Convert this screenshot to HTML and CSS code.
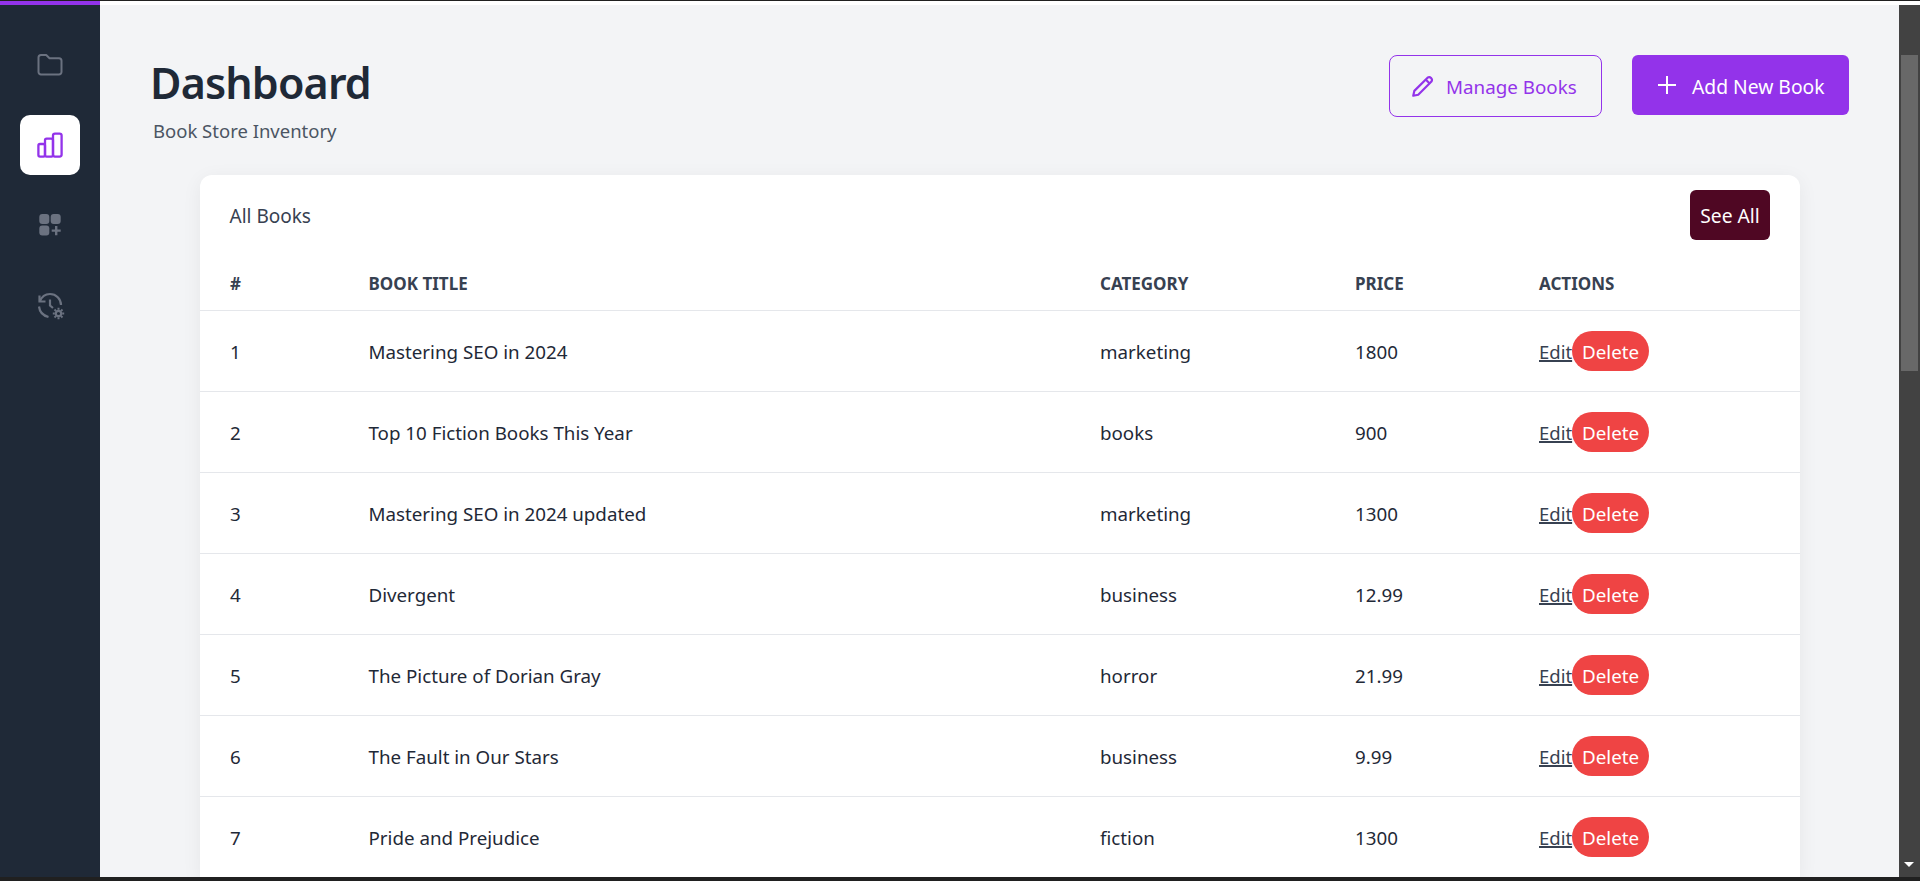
FILE: index.html
```html
<!DOCTYPE html>
<html lang="en">
<head>
  <meta charset="UTF-8">
  <meta name="viewport" content="width=device-width, initial-scale=1.0">
  <title>Dashboard</title>
  <link rel="stylesheet" href="styles.css">
</head>
<body>

<div class="window">
  <div class="page">
    <div class="loadbar"><div class="loadbar-fill"></div></div>
    <div class="layout">

      <nav class="sidebar">
        <a class="side-item">
          <svg class="side-icon" viewBox="0 0 28 28" fill="none" stroke="currentColor" stroke-width="2" stroke-linejoin="round">
            <path d="M2.5 6.5a2.5 2.5 0 0 1 2.5-2.5h5.2l3.3 3.2h9.5a2.5 2.5 0 0 1 2.5 2.5v11.3a2.5 2.5 0 0 1-2.5 2.5H5a2.5 2.5 0 0 1-2.5-2.5z"/>
          </svg>
        </a>
        <a class="side-item active">
          <svg class="side-icon" viewBox="0 0 28 28" fill="none" stroke="currentColor" stroke-width="2.3" stroke-linejoin="round">
            <rect x="2.4" y="13" width="6.6" height="12.6" rx="1.6"/>
            <rect x="9" y="7.6" width="8" height="18" rx="1.6"/>
            <rect x="17" y="2.6" width="8.6" height="23" rx="2"/>
          </svg>
        </a>
        <a class="side-item">
          <svg class="side-icon" viewBox="0 0 28 28" fill="currentColor">
            <rect x="3.3" y="3" width="10" height="10" rx="3"/>
            <rect x="14.7" y="3" width="10" height="10" rx="3"/>
            <rect x="3.3" y="14.6" width="10" height="10" rx="3"/>
            <path d="M19 15h2.4v3.4h3.3v2.4h-3.3v3.4H19v-3.4h-3.3v-2.4H19z"/>
          </svg>
        </a>
        <a class="side-item">
          <svg class="side-icon" viewBox="0 0 28 28" fill="none" stroke="currentColor" stroke-width="2.2">
            <path d="M3.5 4.5v6h6"/>
            <path d="M3.8 10.5C5.5 6 9.5 3 14 3c6 0 11 4.8 11 11"/>
            <path d="M3 15.5c.6 5.2 4.4 9.2 9.5 10.5"/>
            <path d="M14 8.5v6l3 2.5"/>
            <circle cx="22.5" cy="22.5" r="2.7"/>
            <path d="M22.5 16.8v2M22.5 26.2v2M16.8 22.5h2M26.2 22.5h2M18.5 18.5l1.4 1.4M25.1 25.1l1.4 1.4M18.5 26.5l1.4-1.4M25.1 19.9l1.4-1.4" stroke-width="2"/>
          </svg>
        </a>
      </nav>

      <main class="content">
        <header class="topbar">
          <div class="titles">
            <h1 class="title">Dashboard</h1>
            <p class="subtitle">Book Store Inventory</p>
          </div>
          <div class="top-actions">
            <a class="btn btn-outline">
              <svg class="btn-icon" viewBox="0 0 24 24" fill="none" stroke="currentColor" stroke-width="2" stroke-linejoin="round">
                <path d="M4 16.5 16.2 4.3a2.6 2.6 0 0 1 3.6 3.6L7.6 20.1 3 21z"/>
                <path d="M14.5 6l3.6 3.6"/>
              </svg>
              <span class="btn-text">Manage Books</span>
            </a>
            <a class="btn btn-solid">
              <svg class="btn-icon" viewBox="0 0 24 24" fill="none" stroke="currentColor" stroke-width="2">
                <path d="M12 3v18M3 12h18"/>
              </svg>
              <span class="btn-text">Add New Book</span>
            </a>
          </div>
        </header>

        <section class="card">
          <div class="card-head">
            <span class="card-title">All Books</span>
            <a class="see-all">See All</a>
          </div>
          <table class="books">
            <colgroup>
              <col class="col-num">
              <col class="col-title">
              <col class="col-cat">
              <col class="col-price">
              <col>
            </colgroup>
            <thead>
              <tr><th>#</th><th>Book Title</th><th>Category</th><th>Price</th><th>Actions</th></tr>
            </thead>
            <tbody>
              <tr><td>1</td><td>Mastering SEO in 2024</td><td>marketing</td><td>1800</td><td class="actions"><a class="edit">Edit</a><a class="delete">Delete</a></td></tr>
              <tr><td>2</td><td>Top 10 Fiction Books This Year</td><td>books</td><td>900</td><td class="actions"><a class="edit">Edit</a><a class="delete">Delete</a></td></tr>
              <tr><td>3</td><td>Mastering SEO in 2024 updated</td><td>marketing</td><td>1300</td><td class="actions"><a class="edit">Edit</a><a class="delete">Delete</a></td></tr>
              <tr><td>4</td><td>Divergent</td><td>business</td><td>12.99</td><td class="actions"><a class="edit">Edit</a><a class="delete">Delete</a></td></tr>
              <tr><td>5</td><td>The Picture of Dorian Gray</td><td>horror</td><td>21.99</td><td class="actions"><a class="edit">Edit</a><a class="delete">Delete</a></td></tr>
              <tr><td>6</td><td>The Fault in Our Stars</td><td>business</td><td>9.99</td><td class="actions"><a class="edit">Edit</a><a class="delete">Delete</a></td></tr>
              <tr><td>7</td><td>Pride and Prejudice</td><td>fiction</td><td>1300</td><td class="actions"><a class="edit">Edit</a><a class="delete">Delete</a></td></tr>
            </tbody>
          </table>
        </section>
      </main>

      <div class="scrollbar">
        <div class="arrow-up"></div>
        <div class="thumb"></div>
        <div class="track"></div>
        <div class="arrow-down"></div>
      </div>

    </div>
  </div>
</div>

</body>
</html>
```

FILE: styles.css
```css
* {
  box-sizing: border-box;
}

html, body {
  height: 100%;
  margin: 0;
  overflow: hidden;
}

body {
  font-family: 'Noto Sans', sans-serif;
  font-size: 19px;
  color: #1f2937;
  background: #202020;
}

.window {
  height: 100%;
  padding: 1px 0 4px;
}

.page {
  height: 100%;
  display: flex;
  flex-direction: column;
  background: #f3f4f6;
}

.loadbar {
  height: 4px;
  background: #fff;
  flex: none;
}

.loadbar-fill {
  width: 100px;
  height: 100%;
  background: #9333ea;
}

.layout {
  flex: 1;
  min-height: 0;
  display: flex;
}

/* sidebar */
.sidebar {
  width: 100px;
  flex: none;
  background: #1f2937;
  padding-top: 30px;
  display: flex;
  flex-direction: column;
  align-items: center;
  gap: 20px;
}

.side-item {
  width: 60px;
  height: 60px;
  flex: none;
  border-radius: 10px;
  display: flex;
  align-items: center;
  justify-content: center;
  color: #6b7280;
}

.side-item.active {
  background: #fff;
  color: #9333ea;
}

.side-icon {
  width: 28px;
  height: 28px;
  overflow: visible;
}

/* main */
.content {
  flex: 1;
  min-width: 0;
  overflow: hidden;
  padding: 50px 50px 0;
}

.topbar {
  display: flex;
  justify-content: space-between;
  align-items: flex-start;
  height: 120px;
}

.title {
  margin: 0;
  font-size: 43px;
  line-height: 56px;
  font-weight: 600;
  color: #1f2937;
  letter-spacing: -0.85px;
}

.subtitle {
  margin: 8px 0 0 3px;
  font-size: 18.5px;
  line-height: 24px;
  color: #4b5563;
}

.top-actions {
  display: flex;
  gap: 30px;
}

.btn {
  display: flex;
  align-items: center;
  font-size: 19px;
}

.btn-text {
  padding-top: 2px;
}

.btn-icon {
  width: 24px;
  height: 24px;
  flex: none;
}

.btn-outline {
  width: 213px;
  height: 62px;
  padding-left: 20px;
  gap: 10px;
  border: 1px solid #9333ea;
  color: #9333ea;
  border-radius: 8px;
  font-size: 18.8px;
}

.btn-outline .btn-icon {
  width: 26px;
  height: 26px;
}

.btn-solid {
  width: 217px;
  height: 60px;
  padding-left: 23px;
  gap: 13px;
  background: #9333ea;
  color: #fff;
  border-radius: 6px;
  font-size: 19.3px;
}

/* card */
.card {
  margin: 0 49px 0 50px;
  background: #fff;
  border-radius: 12px 12px 0 0;
  box-shadow: 0 4px 20px rgba(0, 0, 0, 0.06);
}

.card-head {
  height: 80px;
  padding: 15px 30px 15px 29.5px;
  display: flex;
  justify-content: space-between;
  align-items: flex-start;
}

.card-title {
  line-height: 52px;
  color: #374151;
}

.see-all {
  width: 80px;
  height: 50px;
  border-radius: 6px;
  background: #4f0723;
  color: #fff;
  font-size: 19.3px;
  line-height: 52px;
  text-align: center;
}

.books {
  width: 100%;
  table-layout: fixed;
  border-collapse: separate;
  border-spacing: 0;
}

.col-num {
  width: 139.5px;
}

.col-title {
  width: 731.5px;
}

.col-cat {
  width: 255px;
}

.col-price {
  width: 184px;
}

.books th {
  height: 56px;
  padding: 2px 0 0 29px;
  text-align: left;
  font-size: 17px;
  font-weight: 700;
  color: #374151;
  text-transform: uppercase;
  border-bottom: 1px solid #e5e7eb;
}

.books td {
  height: 81px;
  padding: 0 0 0 29px;
  font-size: 18.75px;
  color: #1f2937;
  border-bottom: 1px solid #e5e7eb;
}

.books th:first-child,
.books td:first-child {
  padding-left: 30px;
}

.edit {
  color: #374151;
  font-size: 18.5px;
  vertical-align: 1px;
  text-decoration: underline;
  text-decoration-thickness: 2px;
}

.delete {
  display: inline-block;
  vertical-align: 1px;
  width: 77px;
  height: 40px;
  border-radius: 20px;
  background: #ef4444;
  color: #fff;
  font-size: 18.8px;
  line-height: 42px;
  text-align: center;
}

/* fake browser scrollbar */
.scrollbar {
  width: 21px;
  flex: none;
  display: flex;
  flex-direction: column;
  background: #424242;
}

.arrow-up,
.arrow-down {
  height: 50px;
  flex: none;
  position: relative;
}

.arrow-down {
  height: 21px;
}

.arrow-down::after {
  content: "";
  position: absolute;
  left: 5px;
  top: 6px;
  border-left: 5px solid transparent;
  border-right: 5px solid transparent;
  border-top: 5px solid #fff;
}

.thumb {
  height: 316px;
  margin: 0 2px;
  flex: none;
  background: #686868;
}

.track {
  flex: 1;
}
```
